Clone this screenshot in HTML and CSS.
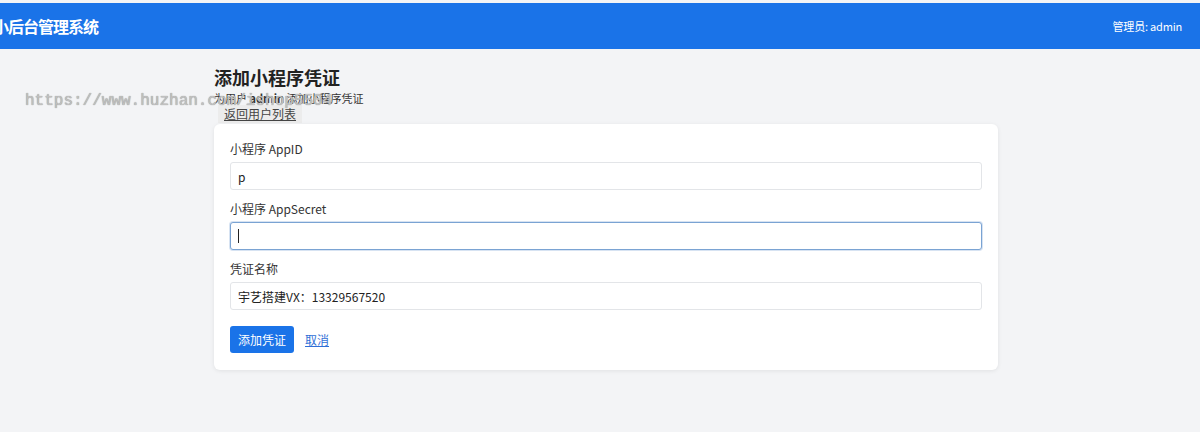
FILE: index.html
```html
<!DOCTYPE html>
<html lang="zh-CN">
<head>
    <meta charset="UTF-8">
    <meta name="viewport" content="width=device-width, initial-scale=1.0">
    <title>添加小程序凭证</title>
    <link rel="stylesheet" href="styles.css">
</head>
<body>
    <!-- 顶部导航 -->
    <header class="topbar">
        <div class="brand">小后台管理系统</div>
        <div class="user">管理员: admin</div>
    </header>

    <!-- 主体内容 -->
    <main class="main">
        <h1 class="page-title">添加小程序凭证</h1>
        <p class="page-desc">为用户 <strong>admin</strong> 添加小程序凭证</p>
        <a href="#" class="back-link">返回用户列表</a>

        <form class="card">
            <div class="field">
                <label>小程序 AppID</label>
                <input type="text" value="p">
            </div>
            <div class="field">
                <label>小程序 AppSecret</label>
                <div class="input focus"><span class="caret"></span></div>
            </div>
            <div class="field">
                <label>凭证名称</label>
                <input type="text" value="宇艺搭建VX：13329567520">
            </div>
            <div class="actions">
                <button type="button" class="btn">添加凭证</button>
                <a href="#" class="cancel">取消</a>
            </div>
        </form>
    </main>

    <!-- 水印 -->
    <div class="watermark">https://www.huzhan.com/ishop5504</div>
</body>
</html>
```

FILE: styles.css
```css
* {
    margin: 0;
    padding: 0;
    box-sizing: border-box;
    font-family: "Noto Sans CJK SC", "Noto Sans", sans-serif;
}

body {
    background-color: #f3f4f6;
    color: #333;
    min-height: 432px;
    overflow: hidden;
}

.topbar {
    margin-top: 3px;
    height: 46px;
    background-color: #1a73e8;
    color: #fff;
    display: flex;
    justify-content: space-between;
    align-items: center;
    padding: 0 18px 0 0;
    overflow: hidden;
}

.brand {
    font-size: 16px;
    font-weight: bold;
    letter-spacing: -1px;
    margin-left: -7px;
}

.user {
    font-size: 11px;
    letter-spacing: -0.2px;
}

.main {
    width: 784px;
    margin-left: calc(50% - 386px);
    padding-top: 16px;
}

.page-title {
    font-size: 18px;
    line-height: 24px;
    color: #222;
}

.page-desc {
    font-size: 11px;
    line-height: 16px;
    margin-top: 1px;
}

.back-link {
    display: block;
    width: fit-content;
    margin: -1px 0 0 4px;
    padding: 1px 6px;
    font-size: 12px;
    line-height: 16px;
    color: #444;
    background-color: #ececec;
}

.card {
    margin-top: 1px;
    background-color: #fff;
    border-radius: 6px;
    box-shadow: 0 1px 4px rgba(0, 0, 0, 0.08);
    padding: 17px 16px 17px;
}

.field {
    margin-bottom: 11px;
}

.field label {
    display: block;
    font-size: 12px;
    line-height: 16px;
    margin-bottom: 5px;
    color: #333;
}

.field input,
.field .input {
    display: block;
    width: 100%;
    height: 28px;
    border: 1px solid #e3e5e8;
    border-radius: 3px;
    padding: 0 7px;
    font-size: 12px;
    color: #222;
    background-color: #fff;
}

.field .input.focus {
    border-color: #7aa3d3;
    box-shadow: 0 0 0 1px rgba(122, 163, 211, 0.3);
    display: flex;
    align-items: center;
}

.caret {
    width: 1px;
    height: 14px;
    background-color: #222;
}

.actions {
    display: flex;
    align-items: center;
    gap: 11px;
    margin-top: 16px;
}

.btn {
    padding: 0 8px;
    height: 27px;
    background-color: #1a73e8;
    color: #fff;
    border: none;
    border-radius: 3px;
    font-size: 12px;
}

.cancel {
    font-size: 12px;
    color: #2f6fd6;
}

.watermark {
    position: absolute;
    top: 92px;
    left: 25px;
    font-family: "Liberation Mono", monospace;
    font-size: 16px;
    color: #c0c0c0;
    text-shadow: 0 0 1px #808080;
    pointer-events: none;
}
```
